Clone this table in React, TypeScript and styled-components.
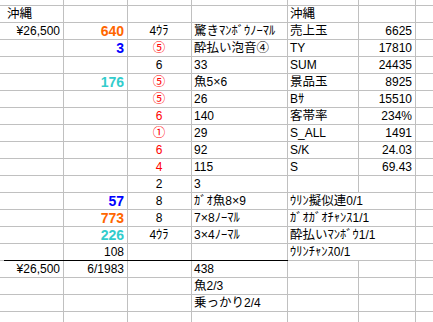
import { createGlobalStyle, styled } from "styled-components"

const GlobalStyle = createGlobalStyle`
	html, body {
		margin: 0;
		padding: 0;
		background: #ffffff;
		overflow: hidden;
	}
	body {
		width: 433px;
		height: 322px;
		font-family: "Liberation Sans", "Noto Sans CJK JP", sans-serif;
		font-size: 12px;
		color: #000000;
	}
`

type Align = "l" | "c" | "r"

type CellData = {
	t: string
	a?: Align
	c?: string
	b?: boolean
	s?: number
}

const ORANGE = "#ff6600"
const BLUE = "#0000ff"
const TEAL = "#33cccc"
const RED = "#ff0000"

// columns A..F, the partial columns on both edges stay empty
const rows: (CellData | null)[][] = [
	[{ t: "沖縄" }, null, null, null, { t: "沖縄" }, null],
	[
		{ t: "¥26,500", a: "r" },
		{ t: "640", a: "r", c: ORANGE, b: true },
		{ t: "4ｳﾗ", a: "c" },
		{ t: "驚きﾏﾝﾎﾞｳﾉｰﾏﾙ" },
		{ t: "売上玉" },
		{ t: "6625", a: "r" },
	],
	[
		null,
		{ t: "3", a: "r", c: BLUE, b: true },
		{ t: "⑤", a: "c", c: RED },
		{ t: "酔払い泡音④" },
		{ t: "TY" },
		{ t: "17810", a: "r" },
	],
	[null, null, { t: "6", a: "c" }, { t: "33" }, { t: "SUM" }, { t: "24435", a: "r" }],
	[
		null,
		{ t: "176", a: "r", c: TEAL, b: true },
		{ t: "⑤", a: "c", c: RED },
		{ t: "魚5×6" },
		{ t: "景品玉" },
		{ t: "8925", a: "r" },
	],
	[null, null, { t: "⑤", a: "c", c: RED }, { t: "26" }, { t: "Bｻ" }, { t: "15510", a: "r" }],
	[null, null, { t: "6", a: "c", c: RED }, { t: "140" }, { t: "客帯率" }, { t: "234%", a: "r" }],
	[null, null, { t: "①", a: "c", c: RED }, { t: "29" }, { t: "S_ALL" }, { t: "1491", a: "r" }],
	[null, null, { t: "6", a: "c", c: RED }, { t: "92" }, { t: "S/K" }, { t: "24.03", a: "r" }],
	[null, null, { t: "4", a: "c", c: RED }, { t: "115" }, { t: "S" }, { t: "69.43", a: "r" }],
	[null, null, { t: "2", a: "c" }, { t: "3" }, null, null],
	[
		null,
		{ t: "57", a: "r", c: BLUE, b: true },
		{ t: "8", a: "c" },
		{ t: "ｶﾞｵ魚8×9" },
		{ t: "ｳﾘﾝ擬似連0/1", s: 2 },
	],
	[
		null,
		{ t: "773", a: "r", c: ORANGE, b: true },
		{ t: "8", a: "c" },
		{ t: "7×8ﾉｰﾏﾙ" },
		{ t: "ｶﾞｵｶﾞｵﾁｬﾝｽ1/1", s: 2 },
	],
	[
		null,
		{ t: "226", a: "r", c: TEAL, b: true },
		{ t: "4ｳﾗ", a: "c" },
		{ t: "3×4ﾉｰﾏﾙ" },
		{ t: "酔払いﾏﾝﾎﾞｳ1/1", s: 2 },
	],
	[null, { t: "108", a: "r" }, null, null, { t: "ｳﾘﾝﾁｬﾝｽ0/1", s: 2 }],
	[{ t: "¥26,500", a: "r" }, { t: "6/1983", a: "r" }, null, { t: "438" }, null, null],
	[null, null, null, { t: "魚2/3" }, null, null],
	[null, null, null, { t: "乗っかり2/4" }, null, null],
	[null, null, null, null, null, null],
]

// row index (0-based) whose top edge carries the black rule, and the columns it covers
const RULE_ROW = 15
const RULE_COLS = 4

const JP_RE = /[\u00d7\u2460-\u24ff\u3000-\u30ff\u4e00-\u9fff\uff00-\uffef]+/g

// split a cell text into latin and japanese runs, so the kana and kanji can be drawn a bit larger
function splitRuns(text: string) {
	const out: { jp: boolean; s: string }[] = []
	let last = 0
	for (const m of text.matchAll(JP_RE)) {
		const i = m.index ?? 0
		if (i > last) out.push({ jp: false, s: text.slice(last, i) })
		out.push({ jp: true, s: m[0] })
		last = i + m[0].length
	}
	if (last < text.length) out.push({ jp: false, s: text.slice(last) })
	return out
}

const Sheet = styled.div`
	display: grid;
	grid-template-columns: 4px 58px 63px 63px 95px 70px 56px 1fr;
	grid-template-rows: 5px;
	grid-auto-rows: 16px;
	gap: 1px;
	background: #c0c0c0;
	width: 433px;
	height: 322px;
	overflow: hidden;
`

const Cell = styled.div<{
	$align?: Align
	$color?: string
	$bold?: boolean
	$span?: number
	$rule?: boolean
}>`
	position: relative;
	display: flex;
	align-items: center;
	justify-content: ${(p) =>
		p.$align === "r" ? "flex-end" : p.$align === "c" ? "center" : "flex-start"};
	grid-column: span ${(p) => p.$span ?? 1};
	padding: 0 3px 0 2px;
	background: #ffffff;
	color: ${(p) => p.$color ?? "#000000"};
	font-weight: ${(p) => (p.$bold ? 700 : 400)};
	font-size: ${(p) => (p.$bold ? "14px" : "12px")};
	line-height: 15px;
	white-space: nowrap;
	overflow: ${(p) => (p.$rule ? "visible" : "hidden")};

	&::before {
		content: "";
		display: ${(p) => (p.$rule ? "block" : "none")};
		position: absolute;
		top: -1px;
		left: -1px;
		right: -1px;
		height: 1px;
		background: #000000;
	}
`

// the latin face stays first so the line box keeps its compact metrics; kana and kanji fall back to Noto
const Jp = styled.span`
	font-size: 12.5px;
`

function cellText(text: string) {
	return splitRuns(text).map((run, i) =>
		run.jp ? <Jp key={i}>{run.s}</Jp> : run.s
	)
}

export default function App() {
	return (
		<>
			<GlobalStyle />
			<Sheet>
				{Array.from({ length: 8 }).map((_, i) => (
					<Cell key={`top-${i}`} />
				))}
				{rows.map((row, r) => {
					const cells = [<Cell key={`${r}-p`} />]
					let col = 0
					for (const d of row) {
						const rule = r === RULE_ROW && col < RULE_COLS
						cells.push(
							<Cell
								key={`${r}-${col}`}
								$align={d?.a}
								$color={d?.c}
								$bold={d?.b}
								$span={d?.s}
								$rule={rule}
							>
								{d && <span>{cellText(d.t)}</span>}
							</Cell>
						)
						col += d?.s ?? 1
					}
					while (col < 6) {
						cells.push(<Cell key={`${r}-${col}`} />)
						col++
					}
					cells.push(<Cell key={`${r}-g`} />)
					return cells
				})}
			</Sheet>
		</>
	)
}
